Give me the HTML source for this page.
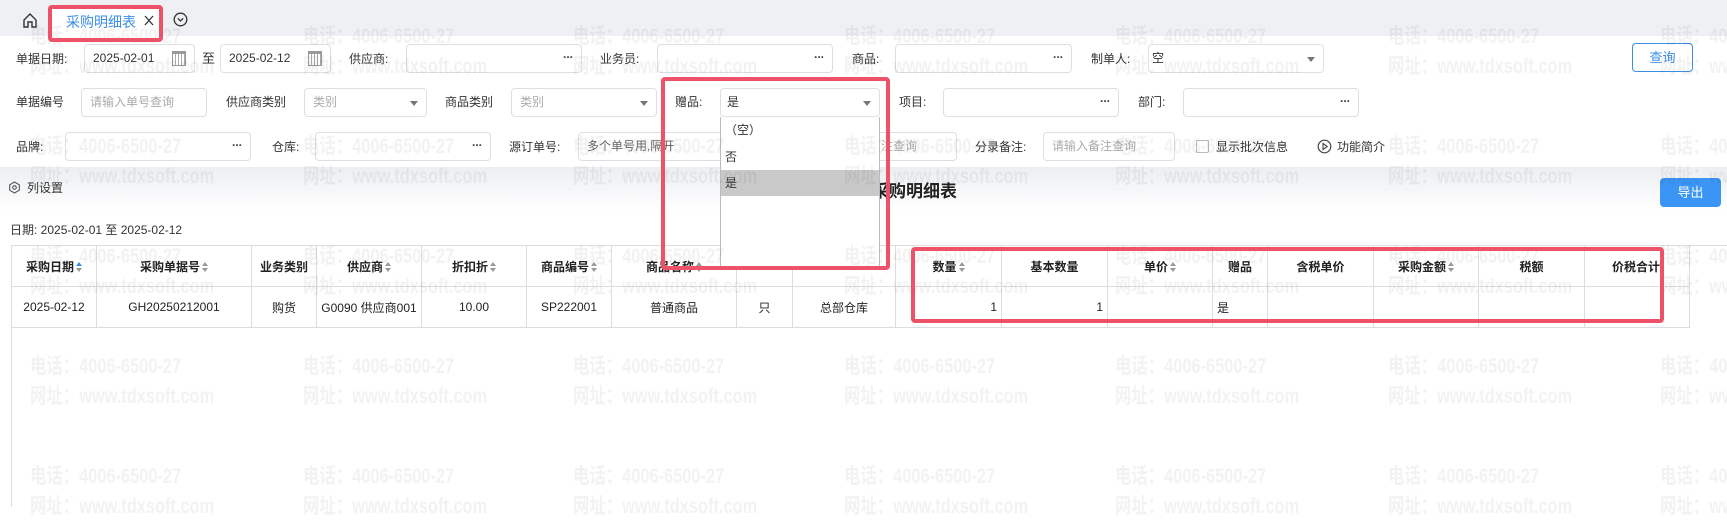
<!DOCTYPE html>
<html><head><meta charset="utf-8"><style>
*{box-sizing:border-box;margin:0;padding:0}
body{width:1727px;height:507px;position:relative;overflow:hidden;background:#fff;font-family:"Liberation Sans","Noto Sans CJK SC",sans-serif;font-size:12px;color:#333}
.a{position:absolute}
.lbl{position:absolute;font-size:12px;color:#333;line-height:16px}
.inp{position:absolute;height:29px;border:1px solid #dcdfe6;border-radius:4px;background:#fff;font-size:12px;line-height:27px;padding-left:8px;color:#333}
.inp .dots{position:absolute;right:8px;top:-4px;font-weight:bold;letter-spacing:0;color:#444}
.ph{color:#aaa}
.caret{position:absolute;right:8px;top:12px;width:0;height:0;border-left:4px solid transparent;border-right:4px solid transparent;border-top:5px solid #777}
.cal{position:absolute;right:8px;top:6px;width:14px;height:15px;border:1px solid #999;border-top:3px solid #999;background:repeating-linear-gradient(90deg,#fff 0 2px,#aaa 2px 3px)}
.wm{position:absolute;font-size:21px;font-weight:bold;color:rgba(0,0,0,0.05);white-space:nowrap;pointer-events:none;z-index:50;transform:scaleX(0.78);transform-origin:0 0}
.tw{position:absolute;left:11px;top:245px;width:1678px;height:84px;overflow:hidden}
table{border-collapse:collapse;table-layout:fixed;width:1679px}
td,th{border:1px solid #ddd;font-size:12px;height:41px;white-space:nowrap;overflow:hidden}
th{font-weight:bold;color:#222;text-align:center}
td{text-align:center;color:#222}
.s{display:inline-block;width:6px;height:10px;vertical-align:middle;margin-left:2px;position:relative}
.s:before{content:"";position:absolute;top:0;left:0;border-left:3px solid transparent;border-right:3px solid transparent;border-bottom:4px solid #999}
.s:after{content:"";position:absolute;bottom:0;left:0;border-left:3px solid transparent;border-right:3px solid transparent;border-top:4px solid #999}
.s.up:before{border-bottom-color:#3a8ee6}
.red{position:absolute;border:4px solid #ee5268;border-radius:4px;z-index:60}
</style></head><body>
<div class="a" style="left:0;top:0;width:1727px;height:36px;background:#eef0f3"></div>
<svg class="a" style="left:22px;top:12px" width="16" height="17" viewBox="0 0 16 17"><path d="M2 8 L8 2 L14 8 V15 H10 V10 H6 V15 H2 Z" fill="none" stroke="#333" stroke-width="1.4"/></svg>
<div class="a" style="left:52px;top:9px;width:108px;height:30px;background:#fff"></div>
<div class="a" style="left:66px;top:12px;font-size:14px;color:#3a8ee6">采购明细表</div>
<svg class="a" style="left:144px;top:15px" width="10" height="11" viewBox="0 0 10 11"><path d="M1 1 L9 10 M9 1 L1 10" stroke="#333" stroke-width="1.3"/></svg>
<svg class="a" style="left:173px;top:12px" width="15" height="15" viewBox="0 0 15 15"><circle cx="7.5" cy="7.5" r="6.3" fill="none" stroke="#333" stroke-width="1.3"/><path d="M4.8 6.3 L7.5 9 L10.2 6.3" fill="none" stroke="#333" stroke-width="1.3"/></svg>
<div class="red" style="left:48px;top:5px;width:115px;height:37px"></div>

<div class="a" style="left:0;top:36px;width:1727px;height:131px;background:#fff"></div>
<div class="a" style="left:0;top:167px;width:1727px;height:45px;background:linear-gradient(#eceef1,#fff)"></div>

<div class="lbl" style="left:16px;top:51px">单据日期:</div>
<div class="inp" style="left:84px;top:44px;width:111px">2025-02-01<span class="cal"></span></div>
<div class="lbl" style="left:202px;top:51px;font-size:13px">至</div>
<div class="inp" style="left:220px;top:44px;width:111px">2025-02-12<span class="cal"></span></div>
<div class="lbl" style="left:349px;top:51px">供应商:</div>
<div class="inp" style="left:406px;top:44px;width:176px"><span class="dots">...</span></div>
<div class="lbl" style="left:600px;top:51px">业务员:</div>
<div class="inp" style="left:657px;top:44px;width:176px"><span class="dots">...</span></div>
<div class="lbl" style="left:852px;top:51px">商品:</div>
<div class="inp" style="left:895px;top:44px;width:177px"><span class="dots">...</span></div>
<div class="lbl" style="left:1091px;top:51px">制单人:</div>
<div class="inp" style="left:1148px;top:44px;width:176px;padding-left:3px">空<span class="caret"></span></div>
<div class="a" style="left:1632px;top:43px;width:61px;height:29px;border:1px solid #3a8ee6;border-radius:4px;color:#3a8ee6;font-size:13px;text-align:center;line-height:27px">查询</div>

<div class="lbl" style="left:16px;top:94px">单据编号</div>
<div class="inp ph" style="left:81px;top:88px;width:126px">请输入单号查询</div>
<div class="lbl" style="left:226px;top:94px">供应商类别</div>
<div class="inp ph" style="left:304px;top:88px;width:123px">类别<span class="caret"></span></div>
<div class="lbl" style="left:445px;top:94px">商品类别</div>
<div class="inp ph" style="left:511px;top:88px;width:146px">类别<span class="caret"></span></div>
<div class="lbl" style="left:675px;top:94px">赠品:</div>
<div class="inp" style="left:720px;top:88px;width:160px;padding-left:6px">是<span class="caret"></span></div>
<div class="lbl" style="left:899px;top:94px">项目:</div>
<div class="inp" style="left:943px;top:88px;width:176px"><span class="dots">...</span></div>
<div class="lbl" style="left:1138px;top:94px">部门:</div>
<div class="inp" style="left:1183px;top:88px;width:176px"><span class="dots">...</span></div>

<div class="lbl" style="left:16px;top:139px">品牌:</div>
<div class="inp" style="left:65px;top:132px;width:186px"><span class="dots">...</span></div>
<div class="lbl" style="left:272px;top:139px">仓库:</div>
<div class="inp" style="left:315px;top:132px;width:176px"><span class="dots">...</span></div>
<div class="lbl" style="left:509px;top:139px">源订单号:</div>
<div class="inp ph" style="left:578px;top:132px;width:180px;color:#666">多个单号用,隔开</div>
<div class="inp ph" style="left:770px;top:132px;width:187px;padding-left:110px">注查询</div>
<div class="lbl" style="left:975px;top:139px">分录备注:</div>
<div class="inp ph" style="left:1043px;top:132px;width:132px">请输入备注查询</div>
<div class="a" style="left:1196px;top:140px;width:13px;height:13px;border:1px solid #bbb;border-radius:2px"></div>
<div class="lbl" style="left:1216px;top:139px">显示批次信息</div>
<svg class="a" style="left:1317px;top:139px" width="15" height="15" viewBox="0 0 15 15"><circle cx="7.5" cy="7.5" r="6.3" fill="none" stroke="#444" stroke-width="1.2"/><path d="M6 4.5 L10.2 7.5 L6 10.5 Z" fill="none" stroke="#444" stroke-width="1.1"/></svg>
<div class="lbl" style="left:1337px;top:139px">功能简介</div>

<svg class="a" style="left:8px;top:181px" width="13" height="13" viewBox="0 0 13 13"><path d="M6.5 1 L11.3 3.8 V9.2 L6.5 12 L1.7 9.2 V3.8 Z" fill="none" stroke="#555" stroke-width="1.1"/><circle cx="6.5" cy="6.5" r="1.8" fill="none" stroke="#555" stroke-width="1.1"/></svg>
<div class="lbl" style="left:27px;top:180px">列设置</div>
<div class="a" style="left:872px;top:177px;font-size:17px;font-weight:bold;color:#222">采购明细表</div>
<div class="a" style="left:1660px;top:178px;width:61px;height:29px;background:#3a95f5;border-radius:4px;color:#fff;font-size:13px;text-align:center;line-height:29px">导出</div>
<div class="lbl" style="left:10px;top:222px">日期: 2025-02-01 至 2025-02-12</div>

<div class="a" style="left:11px;top:245px;width:1716px;height:262px;border-left:1px solid #ddd;border-top:1px solid #ddd"></div>
<div class="tw"><table>
<colgroup><col style="width:85px"><col style="width:155px"><col style="width:65px"><col style="width:105px"><col style="width:105px"><col style="width:85px"><col style="width:125px"><col style="width:56px"><col style="width:103px"><col style="width:106px"><col style="width:106px"><col style="width:105px"><col style="width:55px"><col style="width:106px"><col style="width:105px"><col style="width:106px"><col style="width:106px"></colgroup>
<tr><th>采购日期<span class="s up"></span></th><th>采购单据号<span class="s"></span></th><th>业务类别</th><th>供应商<span class="s"></span></th><th>折扣折<span class="s"></span></th><th>商品编号<span class="s"></span></th><th>商品名称<span class="s"></span></th><th></th><th></th><th>数量<span class="s"></span></th><th>基本数量</th><th>单价<span class="s"></span></th><th>赠品</th><th>含税单价</th><th>采购金额<span class="s"></span></th><th>税额</th><th style="text-align:left;padding-left:27px">价税合计</th></tr>
<tr><td>2025-02-12</td><td>GH20250212001</td><td>购货</td><td>G0090 供应商001</td><td>10.00</td><td>SP222001</td><td>普通商品</td><td>只</td><td>总部仓库</td><td style="text-align:right;padding-right:4px">1</td><td style="text-align:right;padding-right:4px">1</td><td></td><td style="text-align:left;padding-left:4px">是</td><td></td><td></td><td></td><td></td></tr>
</table></div>
<div class="a" style="left:1689px;top:245px;width:1px;height:83px;background:#ddd"></div>

<div class="a" style="left:720px;top:117px;width:160px;height:152px;background:#fff;border:1px solid #bbb;border-top:none;z-index:40">
<div style="height:27px;line-height:27px;padding-left:4px;font-size:12px">（空）</div>
<div style="height:26px;line-height:26px;padding-left:4px;font-size:12px">否</div>
<div style="height:26px;line-height:26px;padding-left:4px;font-size:12px;background:#c9c9c9">是</div>
</div>
<div class="red" style="left:661px;top:77px;width:229px;height:193px"></div>
<div class="red" style="left:911px;top:247px;width:753px;height:76px"></div>

<div id="wm"></div>
<script>
var h="";var xs=[30,303,573,844,1115,1388,1660];var ys=[20,130,240,350,460];
xs.forEach(function(x){ys.forEach(function(y){h+='<div class="wm" style="left:'+x+'px;top:'+y+'px">电话：4006-6500-27</div><div class="wm" style="left:'+x+'px;top:'+(y+30)+'px">网址：www.tdxsoft.com</div>';});});
document.getElementById("wm").innerHTML=h;
</script>
</body></html>
